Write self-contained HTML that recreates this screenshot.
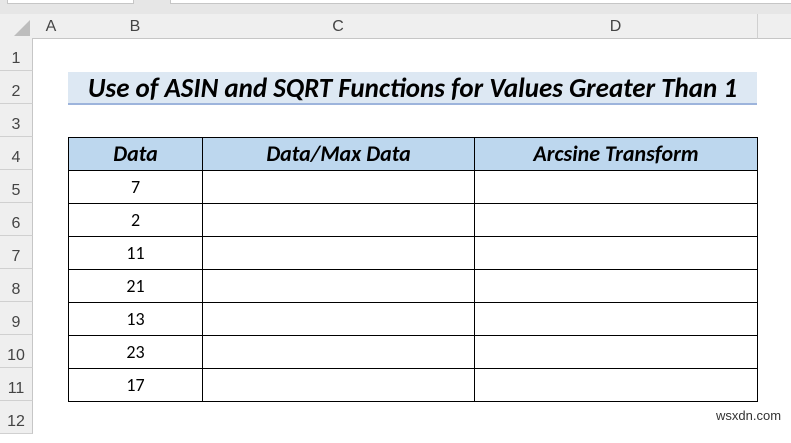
<!DOCTYPE html><html><head><style>
body{margin:0;width:791px;height:430px;overflow:hidden;background:#fff;font-family:"Liberation Sans",sans-serif;position:relative}
.a{position:absolute}
.ch{top:14px;height:24px;background:#efefef;border-bottom:1px solid #c6c6c6;color:#444;font-size:16px;text-align:center;line-height:26px}
.rh{left:0;width:33px;background:#efefef;border-right:1px solid #c6c6c6;color:#444;font-size:16px;text-align:center;box-sizing:border-box}
.c{font-family:Calibri,"Carlito","Liberation Sans",sans-serif;text-align:center}
table td{border:1px solid #000;height:32px;padding:0;text-align:center;font-family:Calibri,"Carlito","Liberation Sans",sans-serif;font-size:18px;line-height:32px}
table tr.h td{font-weight:bold;font-style:italic;font-size:22px;background:#bdd7ee}
</style></head><body>
<div class="a" style="left:0;top:0;width:791px;height:14px;background:#e6e6e6"></div>
<div class="a" style="left:7px;top:0;width:125px;height:3px;background:#fff;border:1px solid #c6c6c6;border-top:0"></div>
<div class="a" style="left:170px;top:0;width:621px;height:3px;background:#fff;border:1px solid #c6c6c6;border-top:0"></div>
<div class="a ch" style="left:0;width:791px"></div>
<svg class="a" style="left:14px;top:20px" width="16" height="16"><polygon points="16,0 16,16 0,16" fill="#bdbdbd"/></svg>
<div class="a ch" style="left:34px;width:34px;border-right:1px solid #d0d0d0">A</div>
<div class="a ch" style="left:68px;width:134px;border-right:1px solid #d0d0d0">B</div>
<div class="a ch" style="left:202px;width:272px;border-right:1px solid #d0d0d0">C</div>
<div class="a ch" style="left:474px;width:283px;border-right:1px solid #d0d0d0">D</div>
<div class="a rh" style="top:38px;height:392px"></div>
<div class="a rh" style="top:38px;height:33px;line-height:42px;border-bottom:1px solid #d0d0d0">1</div>
<div class="a rh" style="top:71px;height:33px;line-height:42px;border-bottom:1px solid #d0d0d0">2</div>
<div class="a rh" style="top:104px;height:33px;line-height:42px;border-bottom:1px solid #d0d0d0">3</div>
<div class="a rh" style="top:137px;height:33px;line-height:42px;border-bottom:1px solid #d0d0d0">4</div>
<div class="a rh" style="top:170px;height:33px;line-height:42px;border-bottom:1px solid #d0d0d0">5</div>
<div class="a rh" style="top:203px;height:33px;line-height:42px;border-bottom:1px solid #d0d0d0">6</div>
<div class="a rh" style="top:236px;height:33px;line-height:42px;border-bottom:1px solid #d0d0d0">7</div>
<div class="a rh" style="top:269px;height:33px;line-height:42px;border-bottom:1px solid #d0d0d0">8</div>
<div class="a rh" style="top:302px;height:33px;line-height:42px;border-bottom:1px solid #d0d0d0">9</div>
<div class="a rh" style="top:335px;height:33px;line-height:42px;border-bottom:1px solid #d0d0d0">10</div>
<div class="a rh" style="top:368px;height:33px;line-height:42px;border-bottom:1px solid #d0d0d0">11</div>
<div class="a rh" style="top:401px;height:33px;line-height:42px;border-bottom:1px solid #d0d0d0">12</div>
<div class="a c" style="left:68px;top:72px;width:689px;height:31px;background:#dde8f3;border-bottom:2px solid #9db4dc;font-size:27px;font-weight:bold;font-style:italic;line-height:33px">Use of ASIN and SQRT Functions for Values Greater Than 1</div>
<table class="a" style="left:68px;top:137px;border-collapse:collapse">
<tr class="h"><td style="width:133px">Data</td><td style="width:271px">Data/Max Data</td><td style="width:282px">Arcsine Transform</td></tr>
<tr><td>7</td><td></td><td></td></tr><tr><td>2</td><td></td><td></td></tr><tr><td>11</td><td></td><td></td></tr><tr><td>21</td><td></td><td></td></tr><tr><td>13</td><td></td><td></td></tr><tr><td>23</td><td></td><td></td></tr><tr><td>17</td><td></td><td></td></tr>
</table>
<div class="a" style="left:716px;top:408px;font-size:13px;color:#333">wsxdn.com</div>
</body></html>
